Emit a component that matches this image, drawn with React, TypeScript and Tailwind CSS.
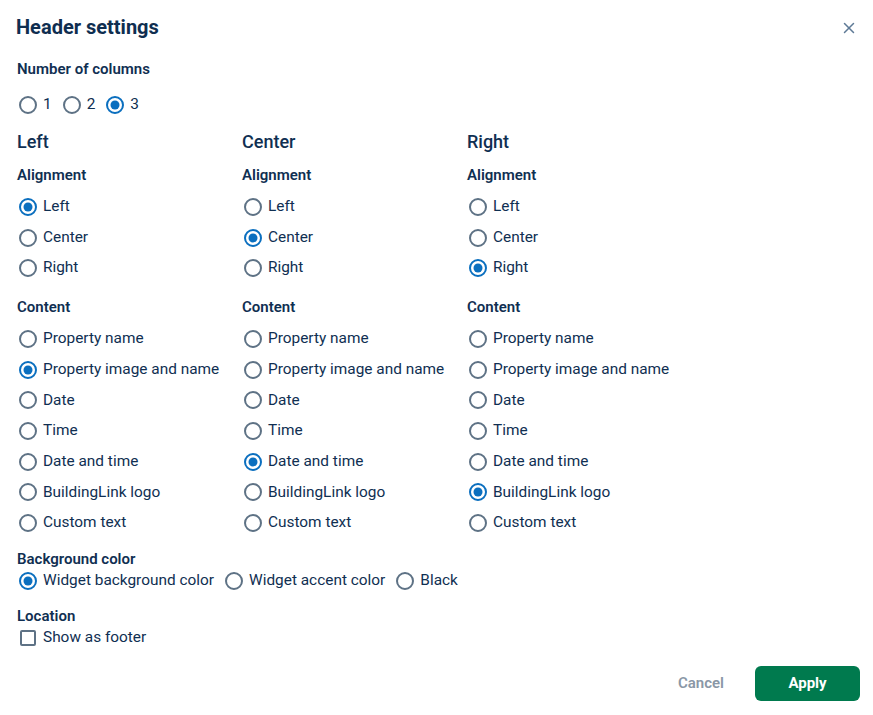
import { X } from 'lucide-react';

const Radio = ({ checked, label }: { checked?: boolean; label: string }) => (
  <label className="flex items-center gap-[5px] h-[20px]">
    <svg width="20" height="20" viewBox="0 0 20 20" className="shrink-0">
      <circle cx="10" cy="10" r="8" fill="white" stroke={checked ? '#0b6fbf' : '#5e7285'} strokeWidth="2" />
      {checked && <circle cx="10" cy="10" r="4.5" fill="#0b6fbf" />}
    </svg>
    <span className="text-[15.4px] text-[#102f52] leading-none">{label}</span>
  </label>
);

const alignments = ['Left', 'Center', 'Right'];
const contents = [
  'Property name',
  'Property image and name',
  'Date',
  'Time',
  'Date and time',
  'BuildingLink logo',
  'Custom text',
];

const columns = [
  { title: 'Left', align: 'Left', content: 'Property image and name' },
  { title: 'Center', align: 'Center', content: 'Date and time' },
  { title: 'Right', align: 'Right', content: 'BuildingLink logo' },
];

const App = () => {
  return (
    <div className="w-[873px] h-[715px] bg-white text-[#102f52] relative" style={{ fontFamily: 'Roboto, sans-serif' }}>
      <div className="flex items-center justify-between pl-4 pr-[15px] pt-[15px]">
        <h1 className="text-[20px] font-bold leading-[24px] text-[#0f2e50]">Header settings</h1>
        <button className="text-[#5e7a96] mt-[2px]">
          <X size={18} strokeWidth={2} />
        </button>
      </div>

      <div className="px-4">
        <div className="mt-[22px] text-[15px] font-semibold leading-[17px] pl-[1px]">Number of columns</div>
        <div className="flex gap-[10px] mt-[17px] ml-[2px]">
          <Radio label="1" />
          <Radio label="2" />
          <Radio checked label="3" />
        </div>

        <div className="grid grid-cols-[225px_225px_225px] mt-[16px]">
          {columns.map(col => (
            <div key={col.title}>
              <div className="text-[18px] font-medium leading-[22px] pl-[1px]">{col.title}</div>
              <div className="mt-[14px] text-[15px] font-semibold leading-[17px] pl-[1px]">Alignment</div>
              <div className="flex flex-col gap-[10.5px] mt-[13px] ml-[2px]">
                {alignments.map(a => (
                  <Radio key={a} checked={a === col.align} label={a} />
                ))}
              </div>
              <div className="mt-[21px] text-[15px] font-semibold leading-[17px] pl-[1px]">Content</div>
              <div className="flex flex-col gap-[10.7px] mt-[13px] ml-[2px]">
                {contents.map(c => (
                  <Radio key={c} checked={c === col.content} label={c} />
                ))}
              </div>
            </div>
          ))}
        </div>

        <div className="mt-[18px] text-[15px] font-semibold leading-[17px] pl-[1px]">Background color</div>
        <div className="flex gap-[10px] mt-[3px] ml-[2px]">
          <Radio checked label="Widget background color" />
          <Radio label="Widget accent color" />
          <Radio label="Black" />
        </div>

        <div className="mt-[17px] text-[15px] font-semibold leading-[17px] pl-[1px]">Location</div>
        <label className="flex items-center gap-[5px] mt-[3px] ml-[2px] h-[20px]">
          <span className="w-[20px] h-[20px] flex items-center justify-center shrink-0">
            <span className="w-[16px] h-[16px] border-2 border-[#5e7285] rounded-[2px] bg-white" />
          </span>
          <span className="text-[15.4px] leading-none">Show as footer</span>
        </label>
      </div>

      <div className="flex justify-end items-center gap-[11px] pr-[13px] mt-[18px]">
        <button className="text-[15px] font-semibold text-[#8a97a6] px-[20px] h-[35px]">Cancel</button>
        <button className="w-[105px] h-[35px] rounded-[6px] bg-[#007a4e] text-white text-[15px] font-bold">Apply</button>
      </div>
    </div>
  );
};

export default App;
